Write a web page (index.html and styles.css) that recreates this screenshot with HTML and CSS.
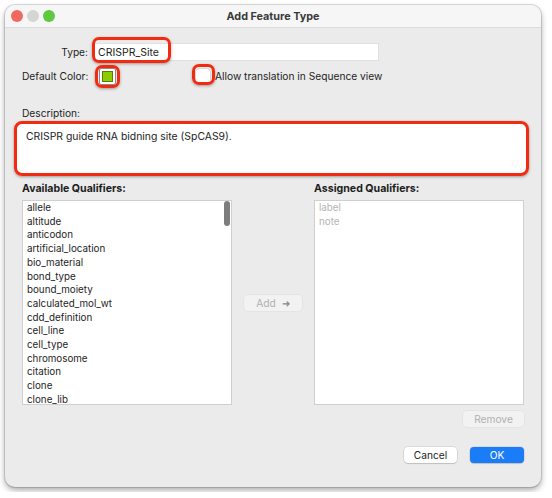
FILE: index.html
```html
<!DOCTYPE html>
<html lang="en">
<head>
  <meta charset="UTF-8" />
  <title>Add Feature Type</title>
  <link rel="stylesheet" href="styles.css">
</head>
<body>

  <div class="window">
    <header class="titlebar">
      <div class="lights">
        <span class="light red"></span>
        <span class="light gray"></span>
        <span class="light green"></span>
      </div>
      <h1>Add Feature Type</h1>
    </header>

    <div class="content">
      <div class="row type-row">
        <label class="label">Type:</label>
        <div class="field">
          <span class="field-text">CRISPR_Site</span>
          <span class="mark mark-type"></span>
        </div>
      </div>

      <div class="row color-row">
        <label class="label">Default Color:</label>
        <div class="swatch-wrap">
          <span class="swatch"></span>
          <span class="mark mark-swatch"></span>
        </div>
        <div class="check-wrap">
          <span class="checkbox"></span>
          <span class="mark mark-check"></span>
        </div>
        <span class="check-label">Allow translation in Sequence view</span>
      </div>

      <div class="desc-label">Description:</div>
      <div class="desc">
        CRISPR guide RNA bidning site (SpCAS9).
        <span class="mark mark-desc"></span>
      </div>

      <div class="qualifiers">
        <div class="col">
          <h3>Available Qualifiers:</h3>
          <ul class="list">
            <li>allele</li>
            <li>altitude</li>
            <li>anticodon</li>
            <li>artificial_location</li>
            <li>bio_material</li>
            <li>bond_type</li>
            <li>bound_moiety</li>
            <li>calculated_mol_wt</li>
            <li>cdd_definition</li>
            <li>cell_line</li>
            <li>cell_type</li>
            <li>chromosome</li>
            <li>citation</li>
            <li>clone</li>
            <li>clone_lib</li>
          </ul>
          <span class="thumb"></span>
        </div>

        <div class="middle">
          <button class="btn disabled add-btn">Add <span class="arrow">&#10140;</span></button>
        </div>

        <div class="col">
          <h3>Assigned Qualifiers:</h3>
          <ul class="list muted">
            <li>label</li>
            <li>note</li>
          </ul>
          <div class="remove-row">
            <button class="btn disabled">Remove</button>
          </div>
        </div>
      </div>

      <footer class="actions">
        <button class="btn">Cancel</button>
        <button class="btn primary">OK</button>
      </footer>
    </div>
  </div>

</body>
</html>
```

FILE: styles.css
```css
body {
  margin: 0;
  background: #fff;
  font-family: Inter, "Liberation Sans", sans-serif;
  font-size: 10.2px;
  color: #1d1d1d;
}

.window {
  margin: 5px;
  width: 536px;
  height: 482px;
  background: #ebebeb;
  border-radius: 10px;
  box-shadow: 0 0 0 1px rgba(0,0,0,0.12), 0 3px 6px rgba(0,0,0,0.35);
  overflow: hidden;
}

/* title bar */
.titlebar {
  position: relative;
  height: 22px;
  background: #f6f6f6;
  border-bottom: 1px solid #dcdcdc;
  display: flex;
  align-items: center;
  justify-content: center;
}
.titlebar h1 {
  margin: 0;
  font-size: 10.8px;
  font-weight: 700;
  color: #3a3a3a;
}
.lights {
  position: absolute;
  left: 6px;
  top: 5px;
  display: flex;
  gap: 4px;
}
.light {
  width: 12px;
  height: 12px;
  border-radius: 50%;
}
.light.red { background: #ee6a5f; }
.light.gray { background: #d5d5d5; }
.light.green { background: #5ec841; }

.content {
  padding: 0 17px;
}

/* annotation rings */
.mark {
  position: absolute;
  box-sizing: border-box;
  border: 3px solid #f22a0f;
  border-radius: 7px;
  box-shadow: 0 1px 3px rgba(0,0,0,0.35);
  pointer-events: none;
}

.row {
  display: flex;
  align-items: center;
}
.label {
  width: 66px;
  text-align: right;
  white-space: nowrap;
  flex: none;
}

.type-row {
  margin-top: 16px;
  height: 16px;
}
.field {
  position: relative;
  margin-left: 6px;
  width: 284px;
  height: 16px;
  background: #fff;
  box-shadow: 0 0 0 1px #e0e0e0;
  display: flex;
  align-items: center;
}
.field-text {
  padding-left: 4px;
  font-size: 10.5px;
}
.mark-type {
  left: -2px;
  top: -7px;
  width: 79px;
  height: 26px;
}

.color-row {
  margin-top: 5px;
  height: 22px;
}
.swatch-wrap {
  position: relative;
  margin-left: 11px;
  width: 17px;
  height: 17px;
  background: #fff;
  border: 1px solid #8a8a8a;
  border-radius: 2px;
  box-sizing: border-box;
  display: flex;
  align-items: center;
  justify-content: center;
}
.swatch {
  width: 11px;
  height: 11px;
  background: #8ccc00;
  border: 1px solid #5a7a10;
  box-sizing: border-box;
}
.mark-swatch {
  left: -5px;
  top: -4px;
  width: 25px;
  height: 23px;
}
.check-wrap {
  position: relative;
  margin-left: 80px;
  width: 14px;
  height: 14px;
}
.checkbox {
  display: block;
  width: 14px;
  height: 14px;
  background: #fff;
  border-radius: 3px;
  box-shadow: 0 0 0 0.5px #c8c8c8;
}
.mark-check {
  left: -4px;
  top: -5px;
  width: 23px;
  height: 21px;
}
.check-label {
  margin-left: 5px;
}

.desc-label {
  margin-top: 20px;
  line-height: 13px;
}
.desc {
  position: relative;
  margin-top: 4px;
  margin-left: -5px;
  margin-right: -2px;
  height: 49px;
  background: #fff;
  padding: 6px 0 0 9px;
  box-sizing: border-box;
  font-size: 10.4px;
}
.mark-desc {
  left: -3px;
  top: -3px;
  right: -3px;
  bottom: -3px;
  border-radius: 8px;
}

/* qualifier lists */
.qualifiers {
  display: flex;
  margin-top: 9px;
}
.col {
  position: relative;
  width: 210px;
  display: flex;
  flex-direction: column;
}
.col h3 {
  margin: 0 0 5px;
  font-size: 10.6px;
  line-height: 13px;
  font-weight: 700;
}
.list {
  list-style: none;
  margin: 0;
  padding: 0 0 0 4px;
  height: 205px;
  box-sizing: border-box;
  background: #fff;
  border: 1px solid #cfcfcf;
  font-size: 9.8px;
  line-height: 13.7px;
}
.list.muted { color: #b4b4b4; }
.thumb {
  position: absolute;
  left: 202px;
  top: 19px;
  width: 6px;
  height: 25px;
  border-radius: 3px;
  background: #7d7d7d;
}
.middle {
  width: 82px;
  display: flex;
  align-items: flex-start;
  justify-content: center;
  padding-top: 113px;
}

.btn {
  font-family: inherit;
  font-size: 10.2px;
  height: 16px;
  padding: 0 12px;
  border: none;
  border-radius: 4px;
  background: #fff;
  color: #1d1d1d;
  box-shadow: 0 0 0 0.5px rgba(0,0,0,0.15), 0 1px 1px rgba(0,0,0,0.12);
}
.btn.disabled {
  background: #f2f2f2;
  color: #b0b0b0;
  box-shadow: 0 0 0 0.5px rgba(0,0,0,0.06);
}
.add-btn { width: 58px; padding: 0; }
.arrow { color: #8a8a8a; font-size: 10px; margin-left: 3px; }

.remove-row {
  display: flex;
  justify-content: flex-end;
  margin-top: 6px;
}
.remove-row .btn { width: 61px; padding: 0; }

.actions {
  display: flex;
  justify-content: flex-end;
  gap: 13px;
  margin-top: 20px;
}
.actions .btn { width: 53px; padding: 0; }
.btn.primary {
  background: #1a7cf7;
  color: #fff;
  width: 54px;
}
```
